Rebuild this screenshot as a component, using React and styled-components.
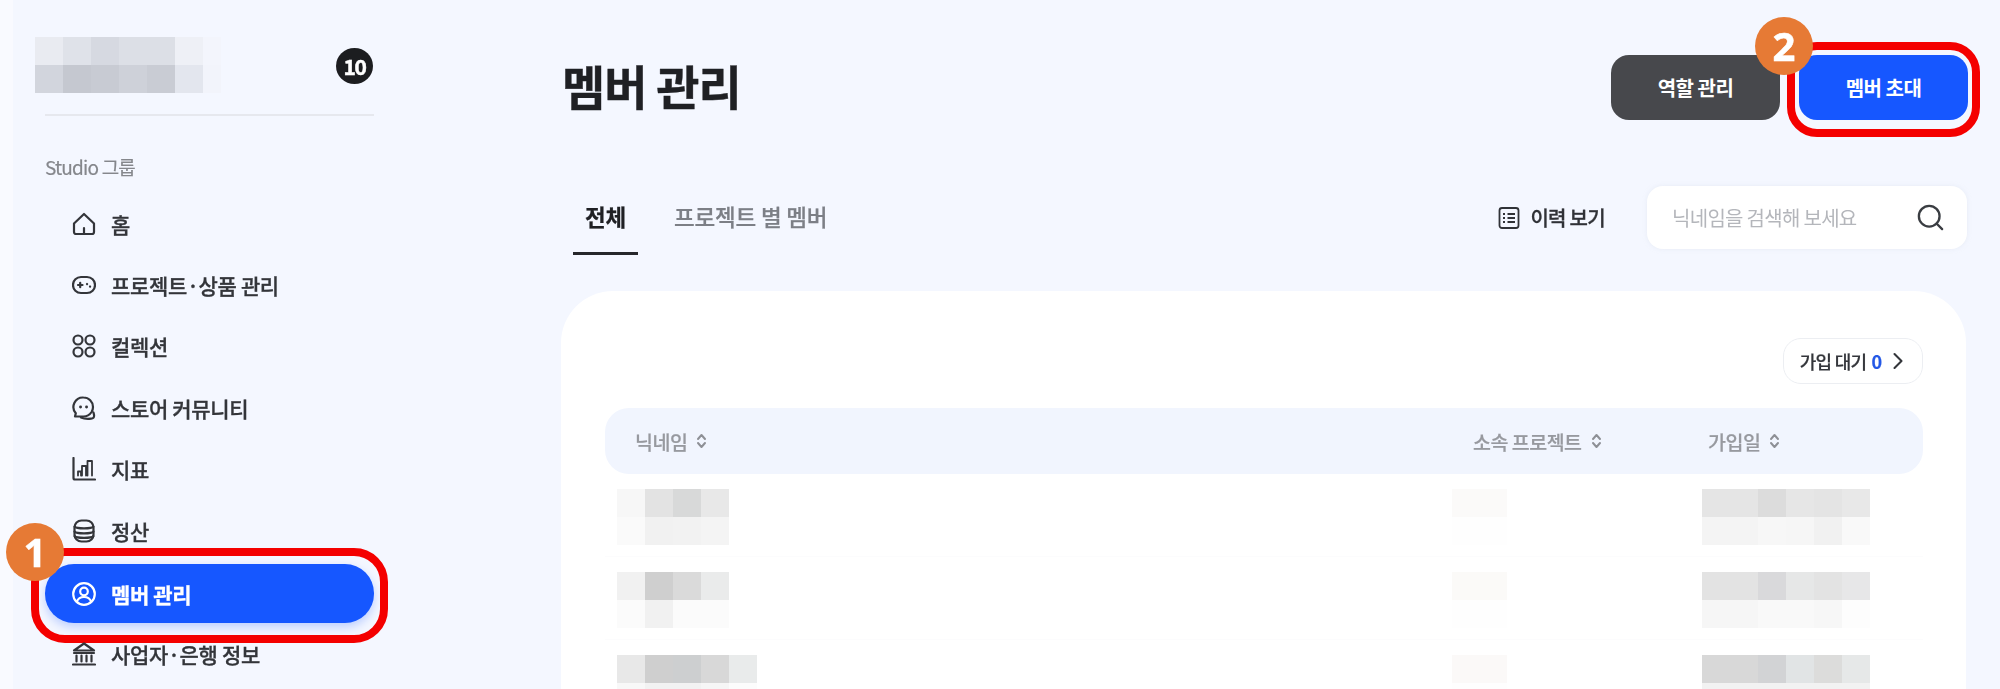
import React from "react";
import styled, { createGlobalStyle } from "styled-components";
import { Search, ChevronRight } from "lucide-react";

const GlobalStyle = createGlobalStyle`
  html, body {
    margin: 0;
    height: 100%;
    background: #f4f7ff;
  }
  body {
    font-family: "Noto Sans CJK KR", "Noto Sans", sans-serif;
    color: #1f2024;
    overflow: hidden;
  }
`;

const Page = styled.div`
  display: flex;
  width: 2000px;
  height: 689px;
  overflow: hidden;
  filter: blur(0.4px);
`;

const Sidebar = styled.aside`
  width: 387px;
  flex: none;
  padding: 37px 0 0 32px;
  border-left: 13px solid #f9faff;
  box-sizing: border-box;
`;

const Brand = styled.div`
  display: flex;
  align-items: center;
  justify-content: space-between;
  width: 329px;
  height: 55px;
  padding-bottom: 22px;
  border-bottom: 2px solid #e6e8ee;
`;

const BrandMosaic = styled.div`
  margin-left: -10px;
`;

const CountBadge = styled.span`
  width: 37px;
  height: 36px;
  border-radius: 50%;
  background: #1c1d20;
  color: #fff;
  font-size: 21px;
  font-weight: 700;
  letter-spacing: -1.5px;
  -webkit-text-stroke: 0.5px #fff;
  display: flex;
  align-items: center;
  justify-content: center;
  margin: 3px 1px 0 0;
`;

const GroupLabel = styled.div`
  margin-top: 38px;
  font-size: 19px;
  line-height: 26px;
  letter-spacing: -0.8px;
  color: #85878c;
  -webkit-text-stroke: 0.2px #85878c;
`;

const Nav = styled.nav`
  margin-top: 13px;
  display: flex;
  flex-direction: column;
  width: 329px;
`;

const NavRow = styled.div`
  position: relative;
  height: 61.4px;
  display: flex;
  align-items: center;
  gap: 15px;
  padding-left: 27px;
  border-radius: 29px;
  font-size: 21px;
  font-weight: 500;
  letter-spacing: -0.35px;
  -webkit-text-stroke: 0.3px currentColor;
  color: #33353a;
  white-space: nowrap;
  box-sizing: border-box;

  ${(p) =>
    p.$active &&
    `
    height: 59px;
    margin: 3px 0 0;
    background: #1657ff;
    color: #fff;
    font-weight: 700;
    box-shadow: 0 4px 10px rgba(22, 87, 255, 0.25);
  `}
`;

const NavIcon = styled.svg`
  width: 24px;
  height: 24px;
  flex: none;
  fill: none;
  stroke: currentColor;
  stroke-width: 2.2;
  stroke-linecap: round;
  stroke-linejoin: round;
`;

const RedFrame = styled.span`
  position: absolute;
  border: 8px solid #f40000;
  pointer-events: none;
  box-sizing: border-box;
  inset: ${(p) => p.$inset};
  border-radius: ${(p) => p.$radius};
  -webkit-text-stroke: 0;
`;

const StepBadge = styled.span`
  position: absolute;
  left: ${(p) => p.$left};
  top: ${(p) => p.$top};
  width: 58px;
  height: 58px;
  border-radius: 50%;
  background: #e67a35;
  color: #fff;
  font-family: "Noto Sans", sans-serif;
  font-size: 40px;
  font-weight: 700;
  line-height: 58px;
  text-align: center;
  letter-spacing: 0;
  -webkit-text-stroke: 0.5px #fff;
  z-index: 2;
`;

const Main = styled.main`
  flex: 1;
  min-width: 0;
  display: flex;
  flex-direction: column;
  padding-left: 174px;
  padding-right: 34px;
`;

const TitleRow = styled.header`
  flex: none;
  display: flex;
  align-items: flex-start;
  justify-content: space-between;
  margin-top: 55px;
  height: 65px;
  margin-right: -2px;
`;

const Title = styled.h1`
  margin: -3px 0 0 1px;
  font-size: 47px;
  line-height: 66px;
  font-weight: 700;
  letter-spacing: -1px;
  -webkit-text-stroke: 0.4px #1f2024;
  color: #1f2024;
`;

const ButtonGroup = styled.div`
  display: flex;
  gap: 19px;
`;

const ActionButton = styled.button`
  position: relative;
  width: 169px;
  height: 65px;
  border: 0;
  border-radius: 18px;
  background: ${(p) => p.$bg};
  color: #fff;
  font-family: inherit;
  font-size: 20px;
  font-weight: 700;
  letter-spacing: -0.5px;
  padding: 0;
`;

const ToolRow = styled.div`
  flex: none;
  display: flex;
  align-items: flex-start;
  height: 105px;
  margin-top: 66px;
  margin-right: -1px;
`;

const Tabs = styled.div`
  display: flex;
  flex: 1;
  gap: 36px;
  margin-left: 12px;
`;

const Tab = styled.div`
  height: 69px;
  padding: 0 ${(p) => (p.$active ? "12px" : "0")};
  box-sizing: border-box;
  line-height: 60px;
  font-size: 22.5px;
  font-weight: ${(p) => (p.$active ? 700 : 500)};
  letter-spacing: -0.2px;
  -webkit-text-stroke: 0.25px currentColor;
  color: ${(p) => (p.$active ? "#1f2024" : "#7c7f86")};
  border-bottom: ${(p) => (p.$active ? "3px solid #26272b" : "0")};
`;

const HistoryLink = styled.div`
  display: flex;
  align-items: center;
  gap: 10px;
  height: 62px;
  font-size: 20px;
  font-weight: 500;
  letter-spacing: -0.7px;
  -webkit-text-stroke: 0.3px currentColor;
  color: #303237;
  margin-right: 42px;
  svg {
    width: 22px;
    height: 26px;
    fill: none;
    stroke: currentColor;
    stroke-width: 1.8;
    margin-top: 2px;
  }
`;

const SearchBox = styled.div`
  width: 320px;
  height: 63px;
  box-sizing: border-box;
  padding: 0 21px 0 25px;
  display: flex;
  align-items: center;
  justify-content: space-between;
  background: #fff;
  border-radius: 16px;
  font-size: 20px;
  letter-spacing: -0.7px;
  color: #b4b6bb;
  box-shadow: 0 0 4px rgba(220, 225, 235, 0.5);
  svg {
    color: #3a3d42;
  }
`;

const Panel = styled.section`
  flex: 1;
  min-height: 0;
  overflow: hidden;
  background: #fff;
  border-radius: 52px 52px 0 0;
  padding: 47px 43px 0 44px;
`;

const PanelTop = styled.div`
  display: flex;
  justify-content: flex-end;
  height: 70px;
`;

const PendingButton = styled.div`
  width: 140px;
  height: 46px;
  box-sizing: border-box;
  border: 1.5px solid #eceef2;
  border-radius: 18px;
  display: flex;
  align-items: center;
  justify-content: center;
  gap: 3px;
  font-size: 18px;
  font-weight: 500;
  letter-spacing: -0.7px;
  -webkit-text-stroke: 0.2px currentColor;
  color: #33353a;
  b {
    color: #2458e6;
    margin-left: 5px;
    font-weight: 700;
  }
  svg {
    color: #33353a;
    margin-right: -6px;
  }
`;

const TableHead = styled.div`
  display: grid;
  grid-template-columns: 838px 235px 1fr;
  align-items: center;
  height: 66px;
  padding-left: 30px;
  background: #f1f5fe;
  border-radius: 24px;
  font-size: 19.5px;
  font-weight: 500;
  letter-spacing: -0.5px;
  -webkit-text-stroke: 0.2px currentColor;
  color: #97999f;
`;

const HeadCell = styled.div`
  display: flex;
  align-items: center;
  gap: 9px;
  svg {
    width: 11px;
    height: 16px;
    fill: none;
    stroke: #8e9096;
    stroke-width: 2;
    stroke-linecap: round;
    stroke-linejoin: round;
  }
`;

const TableRow = styled.div`
  display: grid;
  grid-template-columns: 835px 250px 1fr;
  padding: 15px 0 0 12px;
  height: 83px;
  box-sizing: border-box;
  border-bottom: 1px solid #fcfcfd;
`;

const Mosaic = styled.div`
  display: grid;
  grid-template-columns: ${(p) => p.$cols};
  grid-auto-rows: 28px;
  width: max-content;
  filter: blur(0.5px);
`;

const MosaicCell = styled.div`
  background: ${(p) => p.$c};
`;

function Pixelated({ cols, rows }) {
  return (
    <Mosaic $cols={cols}>
      {rows.flat().map((c, i) => (
        <MosaicCell key={i} $c={c} />
      ))}
    </Mosaic>
  );
}

const NAME_COLS = "28px 28px 28px 28px 28px";
const DATE_COLS = "56px 28px 28px 28px 28px";
const PROJECT_COLS = "55px";

const members = [
  {
    name: [
      ["#f7f7f7", "#e3e3e3", "#d8d9d9", "#e8e8e8", "#fff"],
      ["#fafafa", "#f1f1f1", "#f2f2f2", "#f4f4f4", "#fff"],
    ],
    project: [["#fbfaf9"], ["#fefefe"]],
    date: [
      ["#e5e5e5", "#dcdcdc", "#e6e6e6", "#e4e4e4", "#e8e8e8"],
      ["#f4f4f4", "#f7f7f7", "#f6f6f6", "#f1f1f1", "#f9f9f9"],
    ],
  },
  {
    name: [
      ["#f1f1f1", "#cfcfcf", "#dadada", "#eaebeb", "#fff"],
      ["#fbfbfb", "#f1f1f1", "#fbfbfb", "#fbfbfb", "#fff"],
    ],
    project: [["#fbfaf8"], ["#fefefe"]],
    date: [
      ["#e3e3e3", "#d9d9db", "#e6e7e7", "#e3e3e3", "#e7e7e8"],
      ["#f6f6f6", "#f9f9f9", "#f9f9f9", "#f7f7f7", "#fdfdfd"],
    ],
  },
  {
    name: [
      ["#e8e8e8", "#cfcfcf", "#cdcfd0", "#d8d8d8", "#e9ebeb"],
      ["#f8f8f8", "#f2f2f2", "#f2f2f2", "#f6f6f6", "#fcfcfc"],
    ],
    project: [["#fbf9f8"], ["#fefefe"]],
    date: [
      ["#d8d8d8", "#d2d3d5", "#e1e4e5", "#dcdcdb", "#e6e8e8"],
      ["#f2f2f2", "#f2f2f2", "#f2f2f2", "#f2f2f2", "#f2f2f2"],
    ],
  },
];

function SortIcon() {
  return (
    <svg viewBox="0 0 11 16">
      <path d="M2 6l3.5-4L9 6M2 10l3.5 4L9 10" />
    </svg>
  );
}

const navItems = [
  {
    label: "홈",
    icon: (
      <>
        <path d="M2 11.500 12 2l10 9.500V20a2 2 0 0 1-2 2H4a2 2 0 0 1-2-2z" />
        <path d="M12 22v-6" />
      </>
    ),
  },
  {
    label: "프로젝트·상품 관리",
    icon: (
      <>
        <rect x="1" y="4" width="22" height="16" rx="8" />
        <path d="M6 12h4.500M8.200 9.800v4.400" />
        <path d="M15 11l.1.1M18 13.500l.1.1" />
      </>
    ),
  },
  {
    label: "컬렉션",
    icon: (
      <>
        <circle cx="6" cy="6" r="4.500" />
        <circle cx="18" cy="6" r="4.500" />
        <circle cx="6" cy="18" r="4.500" />
        <circle cx="18" cy="18" r="4.500" />
      </>
    ),
  },
  {
    label: "스토어 커뮤니티",
    icon: (
      <>
        <path d="M11.500 1.500a9.500 9.500 0 0 1 9.500 9.500c0 1.800-.5 3.500-1.400 5-1.900 2.800-5 4.500-8.100 4.500H3l.8-3.300A9.500 9.500 0 0 1 11.500 1.500z" />
        <path d="M9 21.500c3 1.500 7 1.500 10 1.200 2-.2 3.500-1 3-4-.2-1-.4-1.700-.6-2.200" />
        <path d="M8.500 11h.1M14.500 11h.1" strokeWidth="2.800" />
      </>
    ),
  },
  {
    label: "지표",
    icon: (
      <>
        <path d="M1.500 1V21a1.500 1.500 0 0 0 1.500 1.500h20" />
        <path d="M6 18.500v-4h3v4M10 18.500V9h4v9.500M15.500 18.500V4h4.500v14.500" strokeWidth="1.800" />
      </>
    ),
  },
  {
    label: "정산",
    icon: (
      <>
        <rect x="2.500" y="1.500" width="19" height="21" rx="7" />
        <path d="M2.500 7.500c2 2.500 17 2.500 19 0M2.500 12.500c2 2.500 17 2.500 19 0M2.500 17c2 2.500 17 2.500 19 0" />
      </>
    ),
  },
  {
    label: "멤버 관리",
    active: true,
    icon: (
      <>
        <circle cx="12" cy="12" r="10.800" />
        <circle cx="12" cy="9.500" r="3.800" />
        <path d="M5 19.500c1-2.800 4-4.500 7-4.500s6 1.700 7 4.500" />
      </>
    ),
  },
  {
    label: "사업자·은행 정보",
    icon: (
      <>
        <path d="M12 1.500 22 8.500H2z" />
        <path d="M2 11h20M4.500 13.500v6M9.500 13.500v6M14.500 13.500v6M19.500 13.500v6M1 22.500h22" />
      </>
    ),
  },
];

export default function App() {
  return (
    <Page>
      <GlobalStyle />
      <Sidebar>
        <Brand>
          <BrandMosaic>
            <Pixelated
              cols="28px 28px 28px 28px 28px 28px 18px"
              rows={[
                ["#e9ebf1", "#dfe2e9", "#d6d9e1", "#dcdfe6", "#dcdfe6", "#eef0f6", "#f3f5fc"],
                ["#d2d5dd", "#c5c8d0", "#c8cbd3", "#ced1d9", "#c9ccd4", "#e3e6ee", "#f2f4fb"],
              ]}
            />
          </BrandMosaic>
          <CountBadge>10</CountBadge>
        </Brand>
        <GroupLabel>Studio 그룹</GroupLabel>
        <Nav>
          {navItems.map((item) => (
            <NavRow key={item.label} $active={item.active}>
              <NavIcon viewBox="0 0 24 24">{item.icon}</NavIcon>
              {item.label}
              {item.active && (
                <>
                  <RedFrame $inset="-16px -14px -20px -14px" $radius="34px" />
                  <StepBadge $left="-39px" $top="-41px">1</StepBadge>
                </>
              )}
            </NavRow>
          ))}
        </Nav>
      </Sidebar>

      <Main>
        <TitleRow>
          <Title>멤버 관리</Title>
          <ButtonGroup>
            <ActionButton $bg="#47484c">역할 관리</ActionButton>
            <ActionButton $bg="#1657ff">
              멤버 초대
              <RedFrame $inset="-13px -12px -17px -12px" $radius="30px" />
              <StepBadge $left="-44px" $top="-38px">2</StepBadge>
            </ActionButton>
          </ButtonGroup>
        </TitleRow>

        <ToolRow>
          <Tabs>
            <Tab $active>전체</Tab>
            <Tab>프로젝트 별 멤버</Tab>
          </Tabs>
          <HistoryLink>
            <svg viewBox="0 0 22 24">
              <rect x="1.500" y="2" width="19" height="20" rx="2.500" />
              <path d="M5 8h2M5 12h2M5 16h2M9.500 8H17M9.500 12H17M9.500 16H17" />
            </svg>
            이력 보기
          </HistoryLink>
          <SearchBox>
            닉네임을 검색해 보세요
            <Search size={31} strokeWidth={1.8} />
          </SearchBox>
        </ToolRow>

        <Panel>
          <PanelTop>
            <PendingButton>
              <span>가입 대기<b>0</b></span>
              <ChevronRight size={28} strokeWidth={1.8} />
            </PendingButton>
          </PanelTop>
          <TableHead>
            <HeadCell>닉네임 <SortIcon /></HeadCell>
            <HeadCell>소속 프로젝트 <SortIcon /></HeadCell>
            <HeadCell>가입일 <SortIcon /></HeadCell>
          </TableHead>
          {members.map((m, i) => (
            <TableRow key={i}>
              <Pixelated cols={NAME_COLS} rows={m.name} />
              <Pixelated cols={PROJECT_COLS} rows={m.project} />
              <Pixelated cols={DATE_COLS} rows={m.date} />
            </TableRow>
          ))}
        </Panel>
      </Main>
    </Page>
  );
}
